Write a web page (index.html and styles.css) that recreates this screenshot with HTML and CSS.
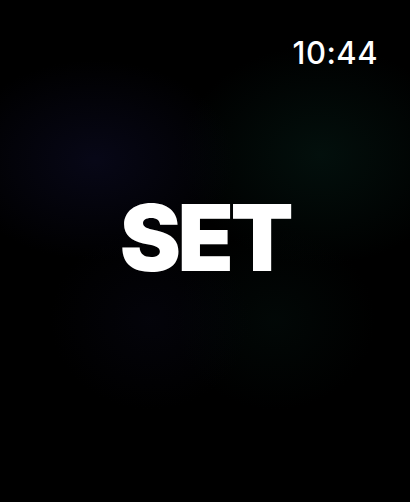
FILE: index.html
```html
<!DOCTYPE html>
<html lang="en">
<head>
    <meta charset="UTF-8">
    <meta name="viewport" content="width=device-width, initial-scale=1.0">
    <title>Set</title>
    <link rel="stylesheet" href="styles.css">
</head>
<body>
    <div class="screen">
        <div class="status-bar">
            <span class="time">10:44</span>
        </div>
        <div class="content">
            <h1 class="word">SET</h1>
        </div>
    </div>
</body>
</html>
```

FILE: styles.css
```css
html, body {
    margin: 0;
    padding: 0;
    height: 100%;
}
body {
    font-family: 'Inter', 'Roboto', sans-serif;
    background: #000;
    color: #fff;
}
.screen {
    height: 100%;
    display: flex;
    flex-direction: column;
    background:
        radial-gradient(ellipse 140px 100px at 95px 160px, rgba(12, 12, 38, 0.6), transparent),
        radial-gradient(ellipse 140px 110px at 320px 155px, rgba(5, 28, 22, 0.55), transparent),
        radial-gradient(ellipse 100px 90px at 150px 320px, rgba(10, 10, 28, 0.35), transparent),
        radial-gradient(ellipse 100px 90px at 275px 320px, rgba(5, 22, 18, 0.35), transparent),
        #000;
}
.status-bar {
    display: flex;
    justify-content: flex-end;
    padding: 35px 32px 0 0;
}
.time {
    font-size: 31px;
    font-weight: 500;
    line-height: 36px;
    letter-spacing: 0.5px;
}
.content {
    flex: 1;
    display: flex;
    align-items: center;
    justify-content: center;
    padding-bottom: 98px;
}
.word {
    margin: 0;
    font-size: 92px;
    font-weight: 900;
    line-height: 1;
    letter-spacing: -3.5px;
}
```
